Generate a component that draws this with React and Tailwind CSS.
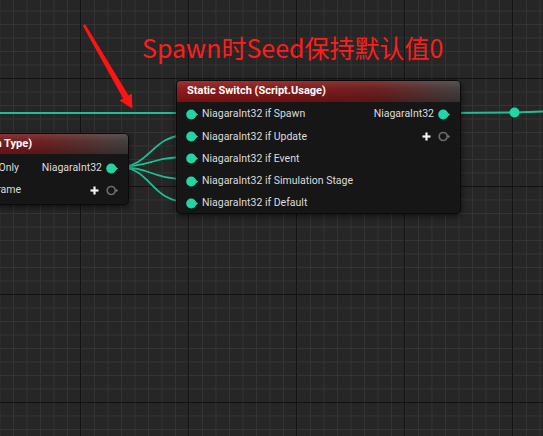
import React from "react";

const PIN = "#22d6a4";
const WIRE = "#1fbf93";

function Pin() {
  return (
    <svg width="13" height="11" viewBox="0 0 13 11" className="shrink-0">
      <circle cx="5.2" cy="5.5" r="5" fill={PIN} />
      <path d="M9.2 3.4 L12.2 5.5 L9.2 7.6 Z" fill={PIN} />
    </svg>
  );
}

function HollowPin() {
  return (
    <svg width="13" height="11" viewBox="0 0 13 11" className="shrink-0">
      <circle cx="5.2" cy="5.5" r="4" fill="none" stroke="#6b6b6b" strokeWidth="1.7" />
      <path d="M9.6 3.6 L12.3 5.5 L9.6 7.4 Z" fill="#6b6b6b" />
    </svg>
  );
}

function Plus() {
  return (
    <svg width="9" height="9" viewBox="0 0 9 9" className="shrink-0">
      <rect x="3.4" y="0.5" width="2.2" height="8" fill="#f2f2f2" />
      <rect x="0.5" y="3.4" width="8" height="2.2" fill="#f2f2f2" />
    </svg>
  );
}

const headerBg =
  "bg-[linear-gradient(180deg,rgba(255,255,255,0.13)_0%,rgba(255,255,255,0.03)_35%,rgba(0,0,0,0.18)_100%),linear-gradient(90deg,#8e1616_0%,#821515_40%,#6a1a1a_70%,#4a3434_92%,#403a3a_100%)]";

export default function App() {
  const inputs = [
    "NiagaraInt32 if Spawn",
    "NiagaraInt32 if Update",
    "NiagaraInt32 if Event",
    "NiagaraInt32 if Simulation Stage",
    "NiagaraInt32 if Default",
  ];
  return (
    <div
      className="relative w-[543px] h-[436px] overflow-hidden bg-[#262626] bg-[linear-gradient(90deg,#121212_1px,transparent_1px),linear-gradient(180deg,#121212_1px,transparent_1px),linear-gradient(90deg,#343434_1px,transparent_1px),linear-gradient(180deg,#343434_1px,transparent_1px)] bg-size-[108px_108px,108px_108px,13.5px_13.5px,13.5px_13.5px] bg-position-[80px_78px,80px_78px,13px_10.5px,13px_10.5px]"
      style={{ fontFamily: "Roboto, 'Noto Sans', sans-serif" }}
    >
      {/* wires */}
      <svg className="absolute inset-0 pointer-events-none" width="543" height="436">
        <path d="M0 113 L188 113" stroke={WIRE} strokeWidth="2" fill="none" />
        <path d="M449 113 L514 112.5 L543 111.5" stroke={WIRE} strokeWidth="2" fill="none" />
        <circle cx="514.5" cy="112.5" r="5" fill={PIN} />
        <path d="M118 167 C152 167 150 135 188 135" stroke={WIRE} strokeWidth="1.8" fill="none" />
        <path d="M118 167 C152 167 150 157 188 157" stroke={WIRE} strokeWidth="1.8" fill="none" />
        <path d="M118 167 C152 167 150 179 188 179" stroke={WIRE} strokeWidth="1.8" fill="none" />
        <path d="M118 167 C152 167 150 202 188 202" stroke={WIRE} strokeWidth="1.8" fill="none" />
      </svg>

      {/* left node (partly off-canvas) */}
      <div className="absolute left-[-160px] top-[133px] w-[289px] h-[72px] rounded-[5px] border border-[#0a0a0a] bg-[#161616] shadow-[0_2px_6px_rgba(0,0,0,0.6)] overflow-hidden">
        <div className={`h-[20px] flex items-center justify-end pr-[96px] ${headerBg}`}>
          <span className="text-[11px] font-bold text-white whitespace-nowrap">Static Switch (Script Execution Type)</span>
        </div>
        <div className="flex flex-col pt-[3px]">
          <div className="flex items-center h-[22px]">
            <span className="flex-1 text-right text-[10.5px] text-[#dcdcdc] whitespace-nowrap">Spawn Only</span>
            <div className="w-[109px] flex items-center justify-end gap-[4px] pr-[9px]">
              <span className="text-[10.5px] text-[#dcdcdc]">NiagaraInt32</span>
              <Pin />
            </div>
          </div>
          <div className="flex items-center h-[22px]">
            <span className="flex-1 text-right text-[10.5px] text-[#dcdcdc] whitespace-nowrap">Frame</span>
            <div className="w-[107px] flex items-center justify-end gap-[7px] pr-[9px]">
              <Plus />
              <HollowPin />
            </div>
          </div>
        </div>
      </div>

      {/* main node */}
      <div className="absolute left-[176px] top-[80px] w-[285px] h-[134px] rounded-[5px] border border-[#0a0a0a] bg-[#161616] shadow-[0_2px_6px_rgba(0,0,0,0.6)] overflow-hidden">
        <div className={`h-[21px] flex items-center pl-[10px] ${headerBg}`}>
          <span className="text-[11px] font-bold text-white whitespace-nowrap">Static Switch (Script.Usage)</span>
        </div>
        <div className="flex pt-[1px]">
          <div className="flex flex-col flex-1">
            {inputs.map((t) => (
              <div key={t} className="flex items-center h-[22.3px] pl-[9px] gap-[3px]">
                <Pin />
                <span className="text-[10.5px] text-[#dcdcdc] whitespace-nowrap">{t}</span>
              </div>
            ))}
          </div>
          <div className="flex flex-col items-end pr-[9px]">
            <div className="flex items-center h-[22.3px] gap-[4px]">
              <span className="text-[10.5px] text-[#dcdcdc]">NiagaraInt32</span>
              <Pin />
            </div>
            <div className="flex items-center h-[22.3px] gap-[7px]">
              <Plus />
              <HollowPin />
            </div>
          </div>
        </div>
      </div>

      {/* annotation arrow */}
      <svg className="absolute inset-0 pointer-events-none" width="543" height="436">
        <polygon
          points="82.8,25.8 85.2,24.3 128.6,95.4 131.8,93.6 132.4,108.8 119.6,100.6 123.2,98.6"
          fill="#ff1414"
        />
      </svg>

      {/* annotation text */}
      <div
        className="absolute left-[142px] top-[30px] text-[25px] leading-[34px] text-[#ff1c1c] whitespace-nowrap"
        style={{ fontFamily: "'Noto Sans CJK SC', 'Liberation Sans', sans-serif" }}
      >
        Spawn时Seed保持默认值0
      </div>
    </div>
  );
}
